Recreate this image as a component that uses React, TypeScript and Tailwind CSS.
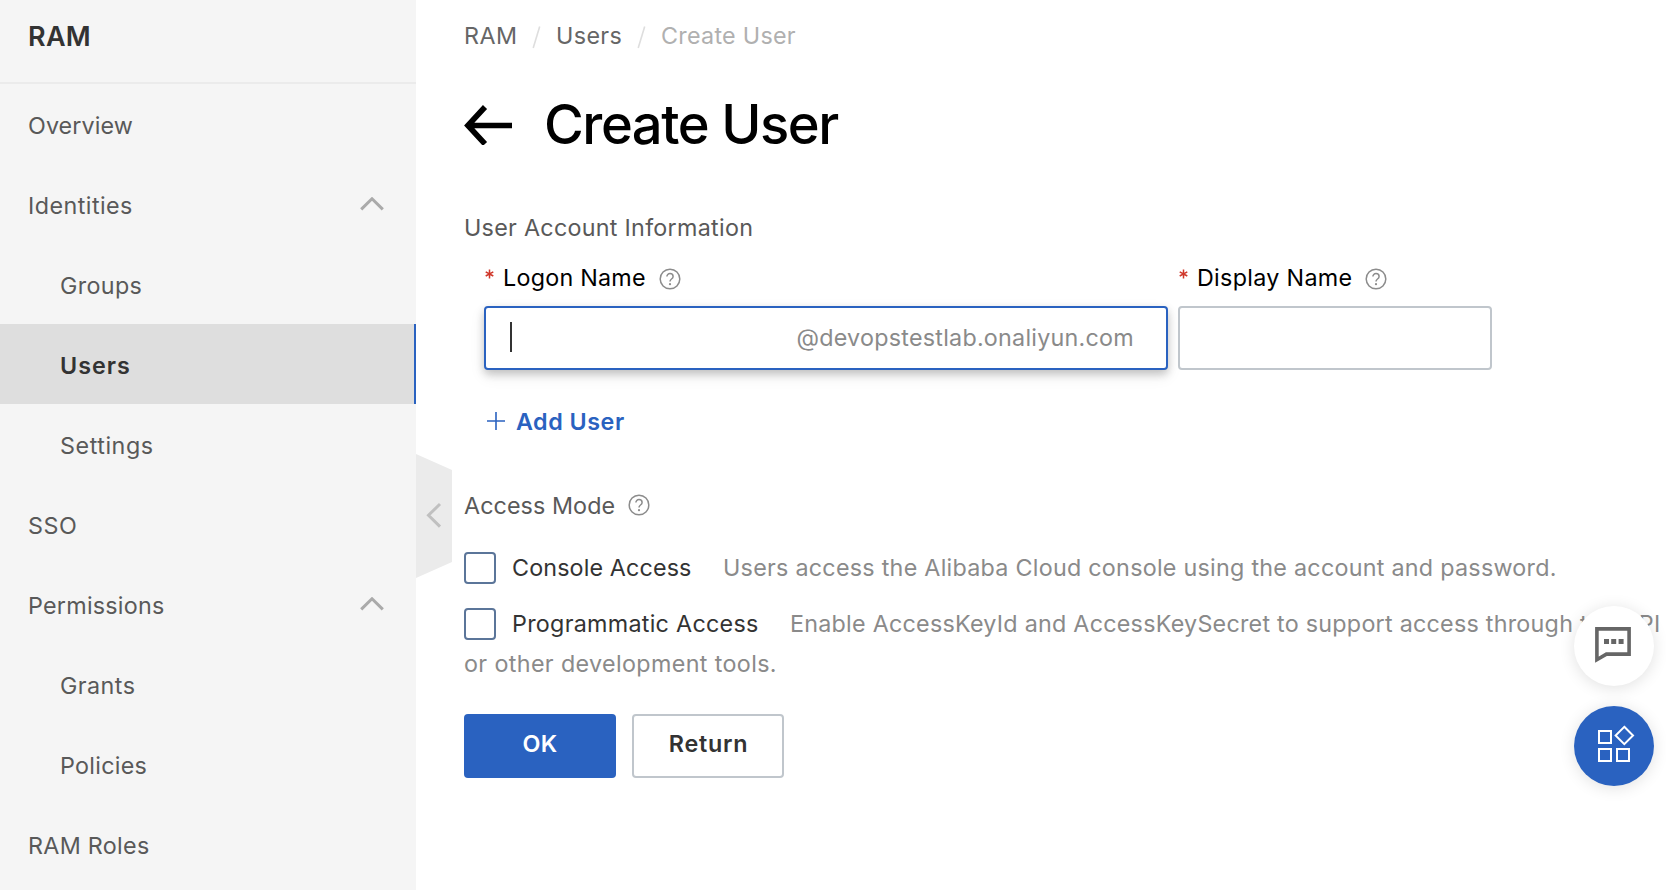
import React from "react";

type NavItem = {
  label: string;
  child?: boolean;
  active?: boolean;
  open?: boolean;
  tracking: string;
};

const navItems: NavItem[] = [
  { label: "Overview", tracking: "tracking-[0.08px]" },
  { label: "Identities", open: true, tracking: "tracking-[0.46px]" },
  { label: "Groups", child: true, tracking: "tracking-[0.35px]" },
  { label: "Users", child: true, active: true, tracking: "tracking-[1px]" },
  { label: "Settings", child: true, tracking: "tracking-[0.55px]" },
  { label: "SSO", tracking: "tracking-[0.5px]" },
  { label: "Permissions", open: true, tracking: "tracking-[0.25px]" },
  { label: "Grants", child: true, tracking: "tracking-[0.45px]" },
  { label: "Policies", child: true, tracking: "tracking-[0.28px]" },
  { label: "RAM Roles", tracking: "tracking-[0.3px]" },
];

function ChevronUp() {
  return (
    <svg width="24" height="14" viewBox="0 0 24 14" fill="none">
      <path d="M1.2 12.4 12 1.8 22.8 12.4" stroke="#aaaaaa" strokeWidth="3" />
    </svg>
  );
}

function HelpIcon() {
  return (
    <svg width="22" height="22" viewBox="0 0 22 22" fill="none" className="shrink-0">
      <circle cx="11" cy="11" r="9.8" stroke="#8c8c8c" strokeWidth="1.5" />
      <path
        d="M7.9 8.6C7.9 6.8 9.2 5.6 11 5.6s3.1 1.2 3.1 2.8c0 1.2-.6 1.9-1.6 2.6-1 .7-1.5 1.2-1.5 2.5"
        stroke="#8c8c8c"
        strokeWidth="1.5"
      />
      <circle cx="11" cy="16.2" r="1.1" fill="#8c8c8c" />
    </svg>
  );
}

function Required() {
  return (
    <svg width="9" height="10" viewBox="0 0 9 10" fill="none" className="-mt-[9px] shrink-0">
      <path d="M4.5 .5v9M.7 2.8l7.6 4.2M8.3 2.8.7 7" stroke="#d0382b" strokeWidth="1.5" />
    </svg>
  );
}

function Sidebar() {
  return (
    <aside className="flex h-full w-[416px] shrink-0 flex-col overflow-hidden bg-[#f5f5f5]">
      <div className="flex h-[84px] shrink-0 items-center border-b-2 border-[#ebebeb] pb-[8px] pl-7">
        <span className="text-[27px] font-semibold tracking-[0.27px] text-[#333]">RAM</span>
      </div>
      <nav className="flex flex-col">
        {navItems.map((item) => (
          <a
            key={item.label}
            className={`flex h-20 shrink-0 items-center justify-between pr-8 ${
              item.child ? "pl-[60px]" : "pl-7"
            } ${
              item.active
                ? "border-r-2 border-[#2a62c0] bg-[#dedede] font-semibold text-[#333]"
                : "text-[#595959]"
            }`}
          >
            <span className={`pt-[3px] ${item.tracking}`}>{item.label}</span>
            {item.open && <ChevronUp />}
          </a>
        ))}
      </nav>
    </aside>
  );
}

function CollapseHandle() {
  return (
    <svg
      width="36"
      height="124"
      viewBox="0 0 36 124"
      fill="none"
      className="absolute top-[454px] left-[416px]"
    >
      <path d="M0 0 36 16V108L0 124Z" fill="#ebebeb" />
      <path d="M24 50 12.5 61.3 24 72.6" stroke="#c0c0c0" strokeWidth="3" />
    </svg>
  );
}

function Checkbox() {
  return (
    <span className="inline-block h-8 w-8 shrink-0 rounded-[4px] border-2 border-[#5b7599] bg-white align-middle" />
  );
}

export default function App() {
  return (
    <div className="relative flex h-[890px] w-[1666px] overflow-hidden bg-white font-['Inter',sans-serif] text-[23.3px] leading-10 tracking-[0.28px] whitespace-nowrap">
      <Sidebar />
      <CollapseHandle />

      <main className="flex min-w-0 flex-1 flex-col pl-12">
        <div className="flex h-[71px] items-center text-[#666]">
          <span className="w-[68px] tracking-[0.5px]">RAM</span>
          <svg width="9" height="23" viewBox="0 0 9 23" fill="none" className="mt-[3px]">
            <path d="M7.7.5 1.2 22" stroke="#dedede" strokeWidth="1.6" />
          </svg>
          <span className="ml-[15px] w-[82px] tracking-[0.38px]">Users</span>
          <svg width="9" height="23" viewBox="0 0 9 23" fill="none" className="-ml-[1px] mt-[3px]">
            <path d="M7.7.5 1.2 22" stroke="#dedede" strokeWidth="1.6" />
          </svg>
          <span className="ml-[15px] tracking-[0.28px] text-[#b0b0b0]">Create User</span>
        </div>

        <div className="flex h-[107px] items-center text-black">
          <svg width="48" height="40" viewBox="0 0 48 40" fill="none">
            <path d="M21 2 3.9 20.5 21 39M3.9 20.5H48" stroke="#000" strokeWidth="5.6" />
          </svg>
          <h1 className="-mt-[2px] ml-[32px] text-[54.3px] leading-[80px] font-medium tracking-[-1.45px]">
            Create User
          </h1>
        </div>

        <section className="flex flex-col pt-[30px]">
          <h2 className="h-10 tracking-[0.28px] text-[#595959]">User Account Information</h2>

          <div className="mt-[10px] flex gap-[10px] pl-5 text-black">
            <div className="w-[684px]">
              <div className="flex h-10 items-center pl-[1px]">
                <Required />
                <span className="ml-[9px] tracking-[0.25px]">Logon Name</span>
                <span className="mt-[2px] ml-[13px] flex">
                  <HelpIcon />
                </span>
              </div>
              <div className="mt-2 flex h-16 items-center justify-between rounded-[4px] border-2 border-[#2a62c0] bg-white pr-8 pl-6 shadow-[0_4px_8px_rgba(0,0,0,0.2),0_6px_16px_rgba(0,0,0,0.08)]">
                <span className="-mt-[2px] h-[30px] w-[2px] bg-[#333]" />
                <span className="tracking-[0.25px] text-[#8a8a8a]">@devopstestlab.onaliyun.com</span>
              </div>
            </div>
            <div className="w-[314px]">
              <div className="flex h-10 items-center pl-[1px]">
                <Required />
                <span className="ml-[9px] tracking-[0.31px]">Display Name</span>
                <span className="mt-[2px] ml-[13px] flex">
                  <HelpIcon />
                </span>
              </div>
              <div className="mt-2 h-16 rounded-[4px] border-2 border-[#c0c6cc] bg-white" />
            </div>
          </div>

          <button className="mt-8 ml-[23px] flex h-10 items-center font-semibold tracking-[0.52px] text-[#2a62c0]">
            <svg width="18" height="18" viewBox="0 0 18 18" className="-mt-[2px]">
              <path d="M9 0v18M0 9h18" stroke="#2a62c0" strokeWidth="1.6" />
            </svg>
            <span className="ml-[11px]">Add User</span>
          </button>
        </section>

        <section className="flex flex-col pt-11">
          <div className="flex h-10 items-center text-[#595959]">
            <h2 className="tracking-[0.08px]">Access Mode</h2>
            <span className="-mt-[2px] ml-[13px] flex">
              <HelpIcon />
            </span>
          </div>

          <div className="mt-[22px] flex h-10 items-center">
            <Checkbox />
            <span className="ml-4 w-[211px] tracking-[0.13px] text-[#333]">Console Access</span>
            <span className="tracking-[0.265px] text-[#8a8a8a]">
              Users access the Alibaba Cloud console using the account and password.
            </span>
          </div>

          <div className="mt-4 flex h-10 items-center">
            <Checkbox />
            <span className="ml-4 w-[278px] text-[#333]">Programmatic Access</span>
            <span className="tracking-[0.25px] text-[#8a8a8a]">
              Enable AccessKeyId and AccessKeySecret to support access through the API
            </span>
          </div>
          <p className="h-10 tracking-[0.37px] text-[#8a8a8a]">or other development tools.</p>

          <div className="mt-[30px] flex gap-4 font-semibold">
            <button className="flex h-16 w-[152px] items-center justify-center rounded-[4px] bg-[#2a62c0] pb-[5px] tracking-[0.4px] text-white">
              OK
            </button>
            <button className="flex h-16 w-[152px] items-center justify-center rounded-[4px] border-2 border-[#c0c6cc] bg-white pb-[5px] pl-[1px] tracking-[0.77px] text-[#333]">
              Return
            </button>
          </div>
        </section>
      </main>

      <div className="absolute top-[606px] left-[1574px] flex flex-col gap-5">
        <button className="flex h-20 w-20 items-center justify-center rounded-full bg-white shadow-[0_2px_16px_rgba(0,0,0,0.12)]">
          <svg width="36" height="36" viewBox="0 0 36 36" fill="none" className="-mt-[2px] -ml-[2px]">
            <path d="M1.9 1.9H34.1V27.1H11.4L1.9 32.7Z" stroke="#666" strokeWidth="3.6" />
            <path d="M9 12h5v5H9zM16.2 12h5v5h-5zM23.6 12h5v5h-5z" fill="#666" />
          </svg>
        </button>
        <button className="flex h-20 w-20 items-center justify-center rounded-full bg-[#2a62c0] shadow-[0_2px_16px_rgba(0,0,0,0.12)]">
          <svg width="38" height="38" viewBox="0 -1 38 38" fill="none" className="-mt-[4px] ml-[6px]">
            <path
              d="M1 5h12v12H1zM1 23h12v12H1zM19 23h12v12H19zM26.3 .8 35 9.5 26.3 18.2 17.6 9.5Z"
              stroke="#fff"
              strokeWidth="2"
            />
          </svg>
        </button>
      </div>
    </div>
  );
}
